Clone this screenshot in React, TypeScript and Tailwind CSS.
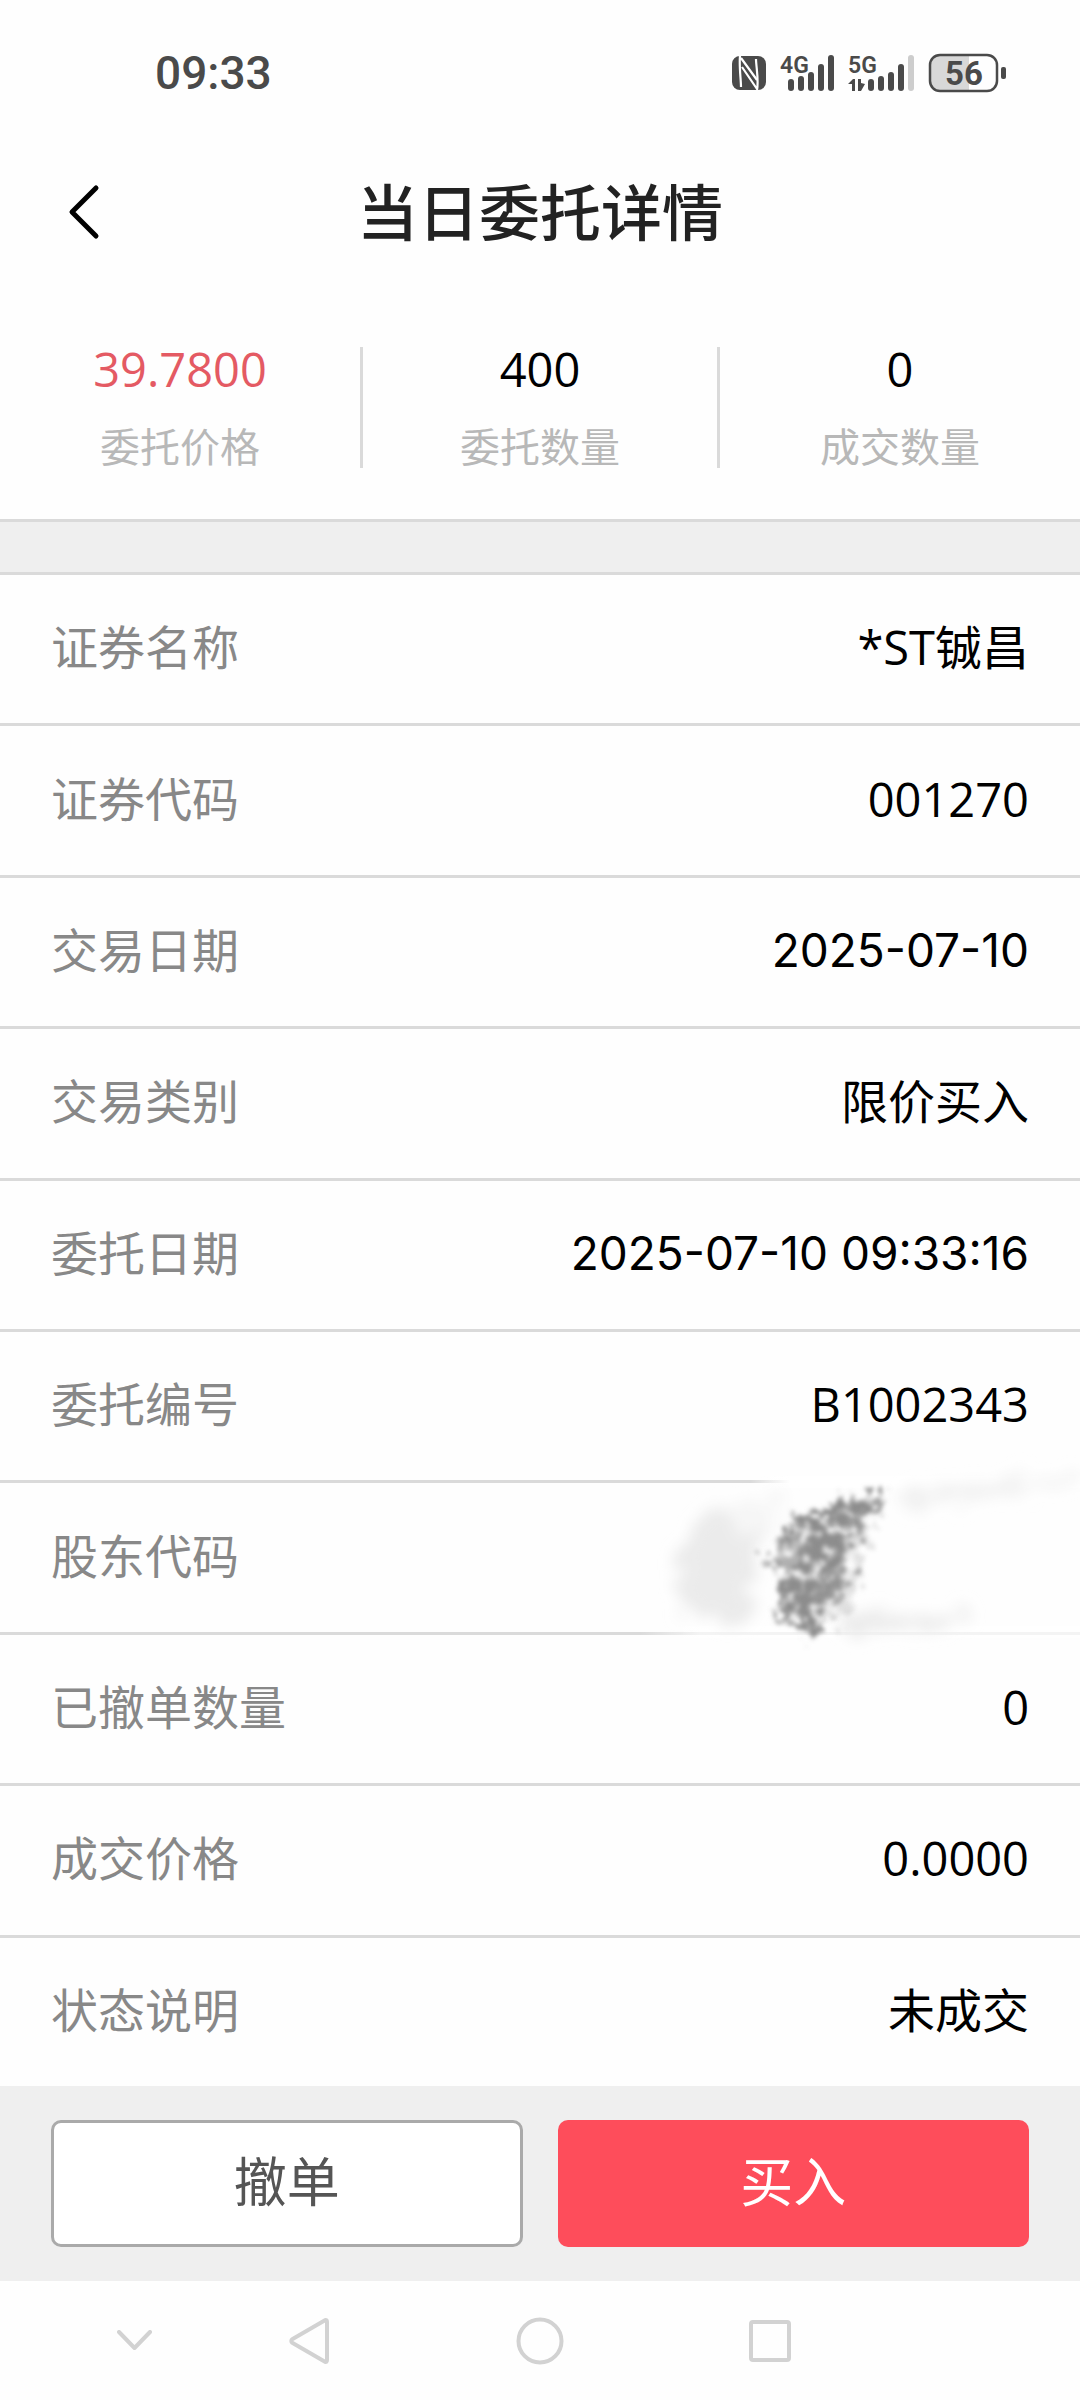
import { useId } from 'react'

const summary = [
  { label: '委托价格', value: '39.7800', color: 'text-[#e45a63]', border: '' },
  { label: '委托数量', value: '400', color: 'text-black', border: 'border-x-3 border-[#dadada]' },
  { label: '成交数量', value: '0', color: 'text-black', border: '' }
]

const details = [
  { label: '证券名称', value: '*ST铖昌' },
  { label: '证券代码', value: '001270' },
  { label: '交易日期', value: '2025-07-10', date: true },
  { label: '交易类别', value: '限价买入' },
  { label: '委托日期', value: '2025-07-10 09:33:16', date: true },
  { label: '委托编号', value: 'B1002343' },
  { label: '股东代码', value: '', masked: true },
  { label: '已撤单数量', value: '0' },
  { label: '成交价格', value: '0.0000' },
  { label: '状态说明', value: '未成交' }
]

const signalBars = [26, 23, 19, 11, 2]

function NfcIcon() {
  return (
    <svg width="34" height="34" viewBox="0 0 34 34" aria-hidden="true">
      <rect width="34" height="34" rx="8" fill="#4a4a4a" />
      <path d="M8 0C7 10 9 24 9 31M9 2L25 24" fill="none" stroke="#fff" strokeWidth="2.2" />
      <path d="M24 3C24 10 27 24 25 34M10 11L25 33" fill="none" stroke="#fff" strokeWidth="2.2" />
    </svg>
  )
}

function SignalIcon({ name, left, width, strength }: { name: string; left: number; width: number; strength: number }) {
  return (
    <svg width={width} height="40" viewBox={`0 0 ${width} 40`} role="img" aria-label={name}>
      <text x="0" y="20" fontSize="23" fontWeight="600" fill="#4a4a4a" className="font-[Roboto,sans-serif]">
        {name}
      </text>
      {left > 20 && (
        <path d="M0 31L5 26H7V38H4V31ZM10 26H13V30L17 31L13 38H10Z" fill="#4a4a4a" />
      )}
      {signalBars.map((top, i) => (
        <rect
          key={top}
          x={left + i * 10 - 3}
          y={top}
          width="6"
          height={38 - top}
          rx="3"
          fill={i < strength ? '#4a4a4a' : '#cdcdcd'}
        />
      ))}
    </svg>
  )
}

function BatteryIcon() {
  return (
    <svg width="78" height="40" viewBox="0 0 78 40" role="img" aria-label="56">
      <path d="M12 2H41V38H12A10 10 0 0 1 2 28V12A10 10 0 0 1 12 2Z" fill="#d8d8d8" />
      <rect x="2" y="2" width="67" height="36" rx="10" fill="none" stroke="#4a4a4a" strokeWidth="2.5" />
      <rect x="73" y="14" width="5" height="12" rx="2" fill="#4a4a4a" />
      <text x="36" y="32" textAnchor="middle" fontSize="33" fontWeight="700" fill="#4a4a4a" className="font-[Roboto,sans-serif]">
        56
      </text>
    </svg>
  )
}

// Brush stroke hiding the account number
function BrushMask() {
  const id = useId()

  return (
    <svg
      className="pointer-events-none absolute top-1/2 right-0 -translate-y-1/2"
      width="480"
      height="220"
      viewBox="0 0 480 220"
      aria-hidden="true"
    >
      <defs>
        <filter id={`${id}soft`} x="-20%" y="-20%" width="140%" height="140%">
          <feTurbulence type="fractalNoise" baseFrequency="0.06" numOctaves="3" seed="4" result="noise" />
          <feDisplacementMap in="SourceGraphic" in2="noise" scale="36" xChannelSelector="R" yChannelSelector="G" result="rough" />
          <feGaussianBlur in="rough" stdDeviation="7" />
        </filter>
        <filter id={`${id}grain`} x="-20%" y="-20%" width="140%" height="140%">
          <feTurbulence type="fractalNoise" baseFrequency="0.09" numOctaves="4" seed="9" result="noise" />
          <feDisplacementMap in="SourceGraphic" in2="noise" scale="44" xChannelSelector="R" yChannelSelector="G" result="rough" />
          <feColorMatrix in="noise" type="matrix" values="0 0 0 0 0  0 0 0 0 0  0 0 0 0 0  0 0 3 0 -0.6" result="holes" />
          <feComposite in="rough" in2="holes" operator="in" />
          <feGaussianBlur stdDeviation="2" />
        </filter>
        <linearGradient id={`${id}fade`} x1="0" x2="1" y1="0" y2="0">
          <stop offset="0" stopColor="#fff" stopOpacity="0" />
          <stop offset="1" stopColor="#fff" />
        </linearGradient>
      </defs>
      <rect x="150" y="28" width="40" height="12" fill={`url(#${id}fade)`} />
      <rect x="190" y="28" width="290" height="12" fill="#fff" />
      <rect x="40" y="178" width="60" height="12" fill={`url(#${id}fade)`} opacity="0.7" />
      <rect x="100" y="178" width="380" height="12" fill="#fff" opacity="0.7" />
      <g filter={`url(#${id}soft)`}>
        <path d="M90 72L125 62L158 64L154 120L152 174L82 168L76 130Z" fill="#ebebeb" />
        <path d="M120 56L190 46L176 80L150 90Z" fill="#f6f6f6" />
        <path d="M290 46L380 34L480 26V38L390 48L300 64Z" fill="#f1f1f1" />
        <path d="M240 164L300 168L340 168L380 162L330 182L250 186Z" fill="#ebebeb" />
      </g>
      <g filter={`url(#${id}grain)`}>
        <path d="M196 68L226 62L240 50L288 44L276 60L260 74L252 94L246 130L232 156L214 188L180 172L180 130L180 96Z" fill="#8c8c8c" />
        <path d="M166 104L200 88L196 130L170 118Z" fill="#b0b0b0" />
      </g>
      <g filter={`url(#${id}grain)`} opacity="0.35">
        <path d="M250 70L280 66L260 110L256 150L236 176L216 170Z" fill="#aaa" />
      </g>
    </svg>
  )
}

export default function App() {
  return (
    <div className="flex min-h-screen w-full flex-col bg-[#fefefe] font-['Open_Sans','Noto_Sans_CJK_SC',sans-serif] text-black">
      {/* Barre d'etat */}
      <div className="flex h-[146px] items-center justify-between pr-[74px] pl-[155px]">
        <span className="font-[Roboto,sans-serif] text-[46px] leading-none font-medium text-[#4a4a4a]">09:33</span>
        <div className="flex items-center gap-[14px]">
          <NfcIcon />
          <SignalIcon name="4G" left={11} width={54} strength={5} />
          <SignalIcon name="5G" left={23} width={66} strength={4} />
          <BatteryIcon />
        </div>
      </div>

      {/* Header */}
      <header className="grid h-[132px] grid-cols-[1fr_auto_1fr] items-center">
        <button type="button" aria-label="返回" className="flex h-full items-center pl-[68px]">
          <svg width="32" height="56" viewBox="0 0 32 56" fill="none" stroke="#000" strokeWidth="5" strokeLinecap="round" strokeLinejoin="round">
            <path d="M28 4L4 28L28 52" />
          </svg>
        </button>
        <h1 className="text-[61px] leading-none font-medium text-[#222]">当日委托详情</h1>
      </header>

      {/* Resume de l'ordre */}
      <section className="grid grid-cols-3 pt-[69px] pb-[51px]">
        {summary.map((item) => (
          <div key={item.label} className={`flex h-[121px] flex-col items-center gap-9 ${item.border}`}>
            <span className={`text-[47px] leading-[44px] ${item.color}`}>{item.value}</span>
            <span className="text-[40px] leading-[40px] text-[#b8b8b8]">{item.label}</span>
          </div>
        ))}
      </section>

      <div className="h-[56px] border-y-3 border-[#dadada] bg-[#efefef]" />

      {/* Details */}
      <dl className="flex flex-1 flex-col">
        {details.map((row) => (
          <div
            key={row.label}
            className="relative flex flex-1 items-center justify-between border-b-3 border-[#dadada] px-[51px] pb-1 text-[47px] leading-[60px] last:border-b-0"
          >
            <dt className="text-[#888]">{row.label}</dt>
            <dd className={row.date ? 'font-[Inter,sans-serif] text-[46px]' : ''}>{row.value}</dd>
            {row.masked && <BrushMask />}
          </div>
        ))}
      </dl>

      {/* Actions */}
      <div className="grid grid-cols-2 gap-[35px] bg-[#efefef] px-[51px] py-[34px]">
        <button type="button" className="h-[127px] rounded-[10px] border-3 border-[#aaa] bg-white pb-1 text-[53px] text-[#555]">
          撤单
        </button>
        <button type="button" className="h-[127px] rounded-[10px] bg-[#fe4d5b] pb-1 text-[53px] text-white">
          买入
        </button>
      </div>

      {/* Navigation systeme */}
      <nav className="grid h-[119px] grid-cols-[195fr_230fr_230fr_230fr_195fr] text-[#d2d2d2]">
        <button type="button" aria-label="收起" className="flex items-center justify-end pr-[43px]">
          <svg width="35" height="21" viewBox="0 0 35 21" fill="none" stroke="currentColor" strokeWidth="4" strokeLinecap="round" strokeLinejoin="round">
            <path d="M2 2L17.5 18L33 2" />
          </svg>
        </button>
        <button type="button" aria-label="返回上一页" className="flex items-center justify-center">
          <svg width="42" height="48" viewBox="0 0 42 48" fill="none" stroke="currentColor" strokeWidth="4" strokeLinejoin="round">
            <path d="M36 3.2L3.2 22.3Q1.4 24 3.2 25.7L36 44.8Q38 45.4 38 43V5Q38 2.6 36 3.2Z" />
          </svg>
        </button>
        <button type="button" aria-label="主屏幕" className="flex items-center justify-center">
          <svg width="48" height="48" viewBox="0 0 48 48" fill="none" stroke="currentColor" strokeWidth="4">
            <circle cx="24" cy="24" r="21.5" />
          </svg>
        </button>
        <button type="button" aria-label="最近任务" className="flex items-center justify-center">
          <svg width="44" height="44" viewBox="0 0 44 44" fill="none" stroke="currentColor" strokeWidth="4">
            <rect x="3" y="3" width="38" height="38" rx="2" />
          </svg>
        </button>
      </nav>
    </div>
  )
}
